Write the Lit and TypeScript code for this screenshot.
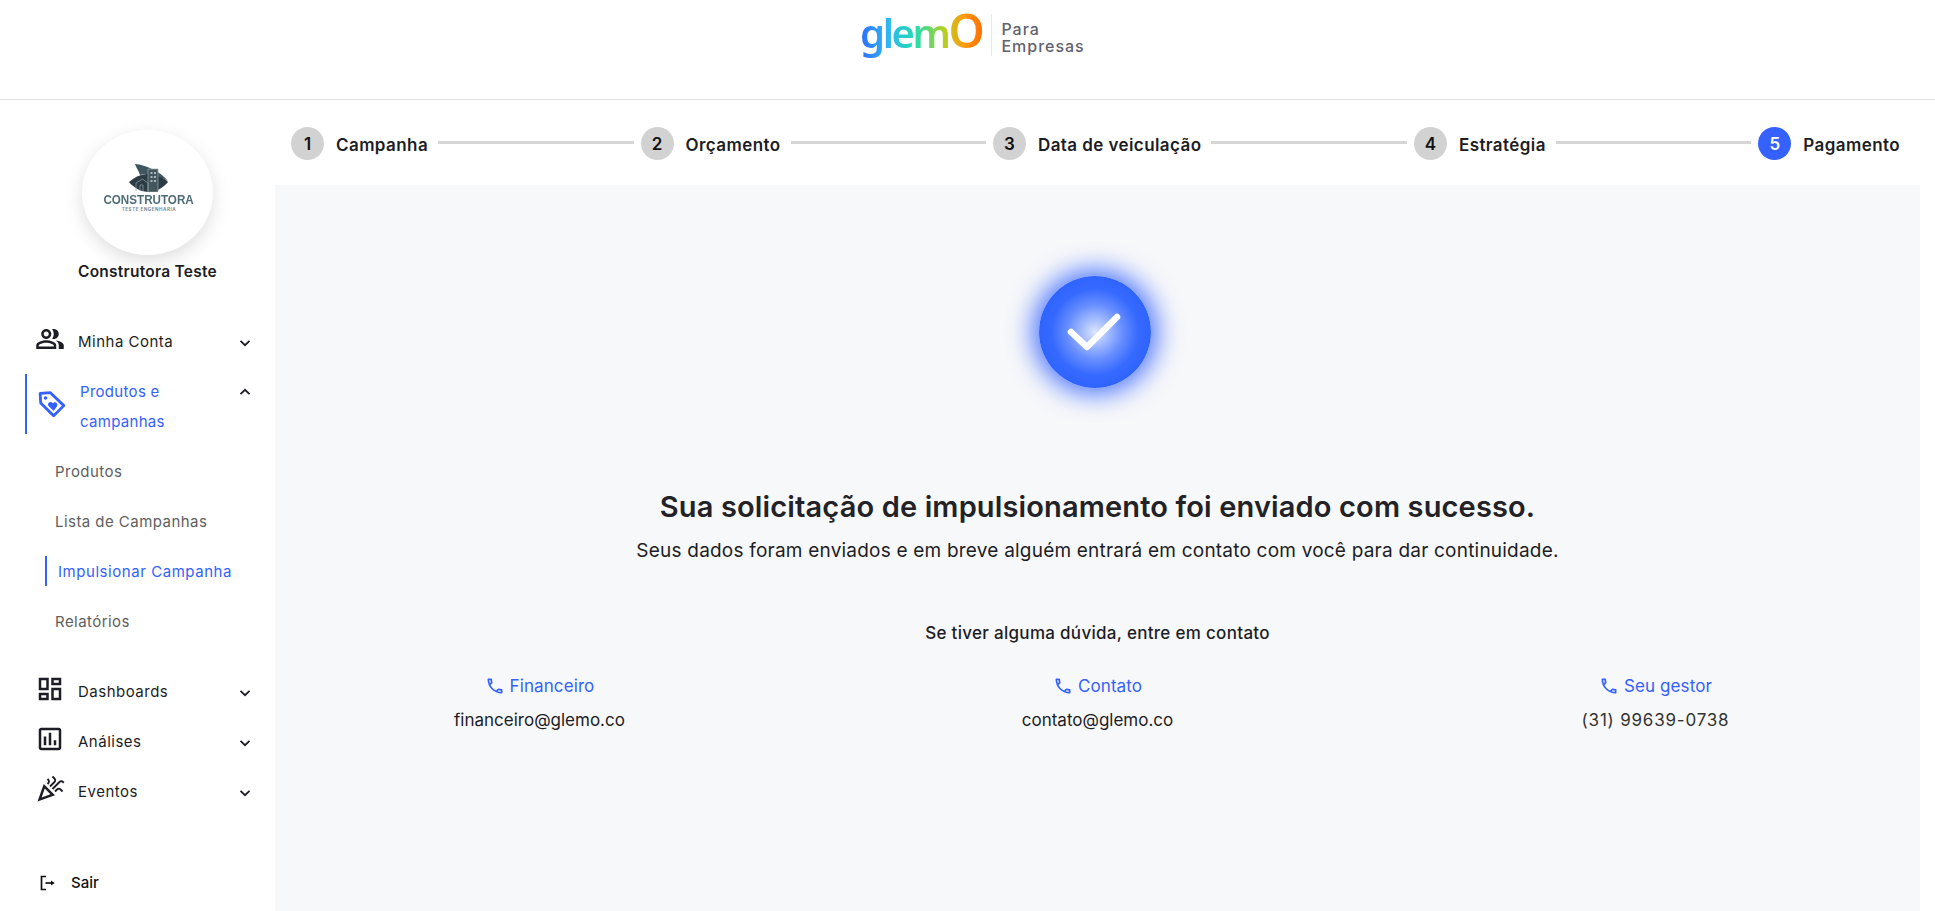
import { LitElement, html, css } from "lit";
import { customElement } from "lit/decorators.js";

const P = {
  people: "M16.67 13.13C18.04 14.06 19 15.32 19 17v3h4v-3c0-2.18-3.57-3.47-6.33-3.87zM15 12c2.21 0 4-1.79 4-4s-1.79-4-4-4c-.47 0-.91.1-1.33.24C14.5 5.27 15 6.58 15 8s-.5 2.73-1.33 3.76c.42.14.86.24 1.33.24zM9 12c2.21 0 4-1.79 4-4s-1.79-4-4-4-4 1.79-4 4 1.79 4 4 4zm0-6c1.1 0 2 .9 2 2s-.9 2-2 2-2-.9-2-2 .9-2 2-2zM9 13c-2.67 0-8 1.34-8 4v3h16v-3c0-2.66-5.33-4-8-4zm6 5H3v-.99C3.2 16.29 6.3 15 9 15s5.8 1.29 6 2z",
  dash: "M19 5v2h-4V5h4M9 5v6H5V5h4m10 8v6h-4v-6h4M9 17v2H5v-2h4M21 3h-8v6h8V3zM11 3H3v10h8V3zm10 8h-8v10h8V11zm-10 4H3v6h8v-6z",
  chart: "M19 3H5c-1.1 0-2 .9-2 2v14c0 1.1.9 2 2 2h14c1.1 0 2-.9 2-2V5c0-1.1-.9-2-2-2zm0 16H5V5h14v14zM7 10h2v7H7zM11 7h2v10h-2zM15 13h2v4h-2z",
  party: "M2 22l14-5-9-9zm10.35-5.82L5.3 18.7l2.52-7.05 4.53 4.53zm2.18-3.65l5.59-5.59c.49-.49 1.28-.49 1.77 0l.59.59 1.06-1.06-.59-.59c-1.07-1.07-2.82-1.07-3.89 0l-5.59 5.59 1.06 1.06zM10.06 6.88l-.59.59 1.06 1.06.59-.59c1.07-1.07 1.07-2.82 0-3.89l-.59-.59-1.06 1.06.59.59c.48.48.48 1.28 0 1.77zm7 5l-1.59 1.59 1.06 1.06 1.59-1.59c.49-.49 1.28-.49 1.77 0l1.61 1.61 1.06-1.06-1.61-1.61c-1.08-1.07-2.82-1.07-3.89 0zm-2-6l-3.59 3.59 1.06 1.06 3.59-3.59c1.07-1.07 1.07-2.82 0-3.89l-1.59-1.59-1.06 1.06 1.59 1.59c.48.49.48 1.29 0 1.77z",
  phone: "M6.54 5c.06.89.21 1.76.45 2.59l-1.2 1.2c-.41-1.2-.67-2.47-.76-3.79h1.51m9.86 12.02c.85.24 1.72.39 2.6.45v1.49c-1.32-.09-2.59-.35-3.8-.75l1.2-1.19M7.5 3H4c-.55 0-1 .45-1 1 0 9.39 7.61 17 17 17 .55 0 1-.45 1-1v-3.49c0-.55-.45-1-1-1-1.24 0-2.45-.2-3.57-.57-.1-.04-.21-.05-.31-.05-.26 0-.51.1-.71.29l-2.2 2.2c-2.83-1.45-5.15-3.76-6.59-6.59l2.2-2.2c.28-.28.36-.67.25-1.02C8.7 6.45 8.5 5.25 8.5 4c0-.55-.45-1-1-1z",
};
const icon = (d: string, cls: string) => html`<svg class=${cls} viewBox="0 0 24 24" fill="currentColor"><path d=${d}></path></svg>`;
const chev = (up: boolean) => html`<svg class="chev" viewBox="0 0 12 8" fill="none" stroke="#1d1d25" stroke-width="1.8"><path d=${up ? "M1.5 6.2 6 1.8l4.5 4.4" : "M1.5 1.8 6 6.2l4.5-4.4"}></path></svg>`;

@customElement("app-root")
export class AppRoot extends LitElement {
  static styles = css`
    :host { display: block; height: 911px; overflow: hidden; background: #fff; font-family: Inter, "Liberation Sans", sans-serif; color: #1d1d25; }
    .top { height: 100px; border-bottom: 1px solid #e4e4e4; display: flex; padding: 8px 0 0 860px; box-sizing: border-box; }
    .logo { display: flex; align-items: flex-start; height: 60px; }
    .glemo { font-family: "Noto Sans", sans-serif; font-size: 40px; height: 52px; line-height: 45px; letter-spacing: -2.4px; font-weight: 600; padding-right: 2px; background: linear-gradient(90deg, #2f6bff 0%, #2fb6f0 22%, #25dcae 45%, #b5d020 68%, #ff9a10 84%, #ff6a00 100%); -webkit-background-clip: text; background-clip: text; color: transparent; filter: blur(.35px); }
    .glemo b { font-weight: 600; font-size: 46px; }
    .lsep { width: 1px; height: 42px; background: #e8e8ea; margin: 6px 9px 0 7px; }
    .ltxt { font-size: 16px; line-height: 17px; font-weight: 500; color: #62626e; padding-top: 13px; letter-spacing: 1px; }
    .body { display: flex; height: 811px; padding-right: 15px; }
    aside { width: 275px; flex: none; position: relative; display: flex; flex-direction: column; }
    .avatar { width: 131px; height: 125px; margin: 30px 0 0 82px; border-radius: 50%; background: #fff; box-shadow: 0 6px 18px rgba(0,0,0,.13); display: flex; flex-direction: column; align-items: center; padding: 34px 0 0 3px; box-sizing: border-box; }
    .avatar svg { width: 40px; height: 28px; display: block; }
    .cname { font-family: "Liberation Sans", sans-serif; font-size: 12px; line-height: 12px; font-weight: 700; color: #4e6d78; margin-top: 2px; transform: scaleX(.97); }
    .csub { font-size: 4.6px; line-height: 5px; font-weight: 700; color: #7c8d94; letter-spacing: .5px; margin-top: 1px; }
    .name { text-align: center; font-weight: 600; font-size: 15.5px; letter-spacing: .25px; line-height: 20px; margin: 7px 0 0 20px; }
    nav { display: flex; flex-direction: column; margin-top: 34px; }
    .item { display: flex; align-items: center; height: 50px; padding-left: 35px; font-size: 15px; letter-spacing: .5px; font-weight: 400; position: relative; }
    .item .ic { width: 30px; height: 30px; flex: none; margin: -4px 13px 0 0; }
    .chev { width: 12px; height: 8px; position: absolute; left: 239px; top: 23px; }
    .active { height: 60px; margin: 8px 0 12px; color: #3461ff; align-items: flex-start; padding-left: 38px; }
    .active::before { content: ""; position: absolute; left: 25px; top: 0; bottom: 0; width: 2px; background: #3461ff; }
    .active .tag { width: 28px; height: 28px; flex: none; margin: 16px 14px 0 0; }
    .active span { width: 130px; line-height: 30px; font-size: 15px; letter-spacing: .3px; font-weight: 400; padding-top: 3px; }
    .active .chev { top: 14px; }
    .sub { height: 50px; display: flex; align-items: center; padding-left: 55px; font-size: 15px; letter-spacing: .45px; color: #606060; position: relative; }
    .sub.on { color: #3461ff; padding-left: 58px; font-weight: 400; letter-spacing: .55px; }
    .sub.on::before { content: ""; position: absolute; left: 45px; top: 10px; height: 30px; width: 2px; background: #3461ff; }
    .sep { height: 20px; }
    .out { position: absolute; left: 40px; top: 771px; display: flex; align-items: center; gap: 15px; font-size: 15px; font-weight: 500; line-height: 24px; color: #111; }
    .out svg { width: 16px; height: 16px; }
    main { flex: 1; min-width: 0; display: flex; flex-direction: column; }
    .steps { height: 85px; flex: none; display: flex; align-items: center; padding: 1px 20px 0 16px; box-sizing: border-box; }
    .step { display: flex; align-items: center; gap: 12px; font-size: 17px; letter-spacing: .42px; font-weight: 600; flex: none; }
    .step span { padding-top: 4px; }
    .num { width: 33px; height: 33px; border-radius: 50%; background: #d2d2d2; display: flex; align-items: center; justify-content: center; font-size: 17px; letter-spacing: 0; color: #111; padding-top: 2px; box-sizing: border-box; }
    .num.cur { background: #3461ff; color: #fff; }
    .line { flex: 1; height: 3px; background: #d6d6d6; margin: 0 7px 0 10px; position: relative; top: -1px; }
    .panel { flex: 1; background: #f7f8fa; display: flex; flex-direction: column; align-items: center; }
    .check { width: 112px; height: 112px; border-radius: 50%; margin: 91px 6px 0 0; flex: none; background: radial-gradient(circle at 50% 50%, #dbe5ff 0%, #a6beff 16%, #6a90ff 34%, #3569ff 55%, #2e62ff 75%, #3461ff 100%); box-shadow: 0 0 24px 7px rgba(40,90,255,.78); }
    .check svg { width: 112px; height: 112px; display: block; }
    h1 { font-size: 29px; letter-spacing: .14px; line-height: 36px; font-weight: 600; margin: 101px 0 0; color: #222227; }
    .lead { font-size: 19px; letter-spacing: .21px; line-height: 26px; margin: 13px 0 0; color: #1d1d25; }
    .ask { font-size: 17px; letter-spacing: .3px; font-weight: 500; line-height: 22px; margin: 58px 0 0; }
    .cols { display: grid; grid-template-columns: repeat(3, 400px); column-gap: 158px; margin-top: 30px; justify-content: center; }
    .col { text-align: center; }
    .ct { color: #3461ff; font-size: 17px; letter-spacing: .1px; line-height: 24px; display: flex; align-items: center; justify-content: center; gap: 5px; }
    .ct svg { width: 20px; height: 20px; }
    .cv { font-size: 17px; line-height: 24px; margin-top: 10px; }
    .cv.tel { letter-spacing: .8px; color: #333; }
  `;
  render() {
    const steps = ["Campanha", "Orçamento", "Data de veiculação", "Estratégia", "Pagamento"];
    return html`
      <header class="top"><div class="logo"><span class="glemo">glem<b>O</b></span><i class="lsep"></i><div class="ltxt">Para<br />Empresas</div></div></header>
      <div class="body">
        <aside>
          <div class="avatar">
            <svg viewBox="0 0 40 28"><path d="M6 0C17 1 31 7 39 17 28 10 19 9 11 11 10 7 7 4 6 0Z" fill="#3f5660"></path><path d="M0 18C7 12 13 10 20 10c8 0 14 3 19 8-5 6-12 10-19 10C12 28 5 24 0 18Z" fill="#2b3c44"></path><path d="M19 5h10v23H19z" fill="#43555d" stroke="#9aa9ae" stroke-width=".7"></path><path d="M21.5 8h2v2h-2zm3.5 0h2v2h-2zm-3.5 4h2v2h-2zm3.5 0h2v2h-2zm-3.5 4h2v2h-2zm3.5 0h2v2h-2z" fill="#aab7bb"></path><path d="M11 27v-6h3v6M7 27v-8l6.5-4 5.5 4v8" fill="none" stroke="#95a4a9" stroke-width=".7"></path></svg>
            <div class="cname">CONSTRUTORA</div><div class="csub">TESTE ENGENHARIA</div>
          </div>
          <div class="name">Construtora Teste</div>
          <nav>
            <div class="item">${icon(P.people, "ic")}Minha Conta${chev(false)}</div>
            <div class="item active">
              <svg class="tag" viewBox="0 0 26 26" fill="none" stroke="#3461ff" stroke-width="2.6" stroke-linejoin="round"><path d="M2 3.2 11.5 2.5 24 14.5 14.5 24 2.5 12Z"></path><circle cx="7" cy="7.4" r="1.7" fill="#3461ff" stroke="none"></circle><path d="M14.5 19.4 10 15c-2.2-2.4 1.4-5.4 3.8-2.8 2.6-2.3 5.8 1.1 3.4 3.6Z" fill="#3461ff" stroke="none"></path></svg>
              <span>Produtos e campanhas</span>${chev(true)}
            </div>
            <div class="sub">Produtos</div>
            <div class="sub">Lista de Campanhas</div>
            <div class="sub on">Impulsionar Campanha</div>
            <div class="sub">Relatórios</div>
            <div class="sep"></div>
            <div class="item">${icon(P.dash, "ic")}Dashboards${chev(false)}</div>
            <div class="item">${icon(P.chart, "ic")}Análises${chev(false)}</div>
            <div class="item">${icon(P.party, "ic")}Eventos${chev(false)}</div>
          </nav>
          <div class="out"><svg viewBox="0 0 16 16" fill="none" stroke="#111" stroke-width="1.7"><path d="M6 1.5H1.5v13H6"></path><path d="M5.5 8h8"></path><path d="M11 5.6 14.6 8 11 10.4Z" fill="#111" stroke="none"></path></svg>Sair</div>
        </aside>
        <main>
          <div class="steps">
            ${steps.map((s, i) => html`
              <div class="step"><div class="num ${i === 4 ? "cur" : ""}">${i + 1}</div><span>${s}</span></div>
              ${i < 4 ? html`<div class="line"></div>` : ""}
            `)}
          </div>
          <section class="panel">
            <div class="check"><svg viewBox="0 0 112 112" fill="none" stroke="#fff" stroke-width="6.5" stroke-linecap="round" stroke-linejoin="round"><path d="M32 56 48 71 78 41"></path></svg></div>
            <h1>Sua solicitação de impulsionamento foi enviado com sucesso.</h1>
            <p class="lead">Seus dados foram enviados e em breve alguém entrará em contato com você para dar continuidade.</p>
            <p class="ask">Se tiver alguma dúvida, entre em contato</p>
            <div class="cols">
              ${[["Financeiro", "financeiro@glemo.co", ""], ["Contato", "contato@glemo.co", ""], ["Seu gestor", "(31) 99639-0738", "tel"]].map(([a, b, c]) => html`
                <div class="col"><div class="ct">${icon(P.phone, "")}${a}</div><div class="cv ${c}">${b}</div></div>`)}
            </div>
          </section>
        </main>
      </div>`;
  }
}
